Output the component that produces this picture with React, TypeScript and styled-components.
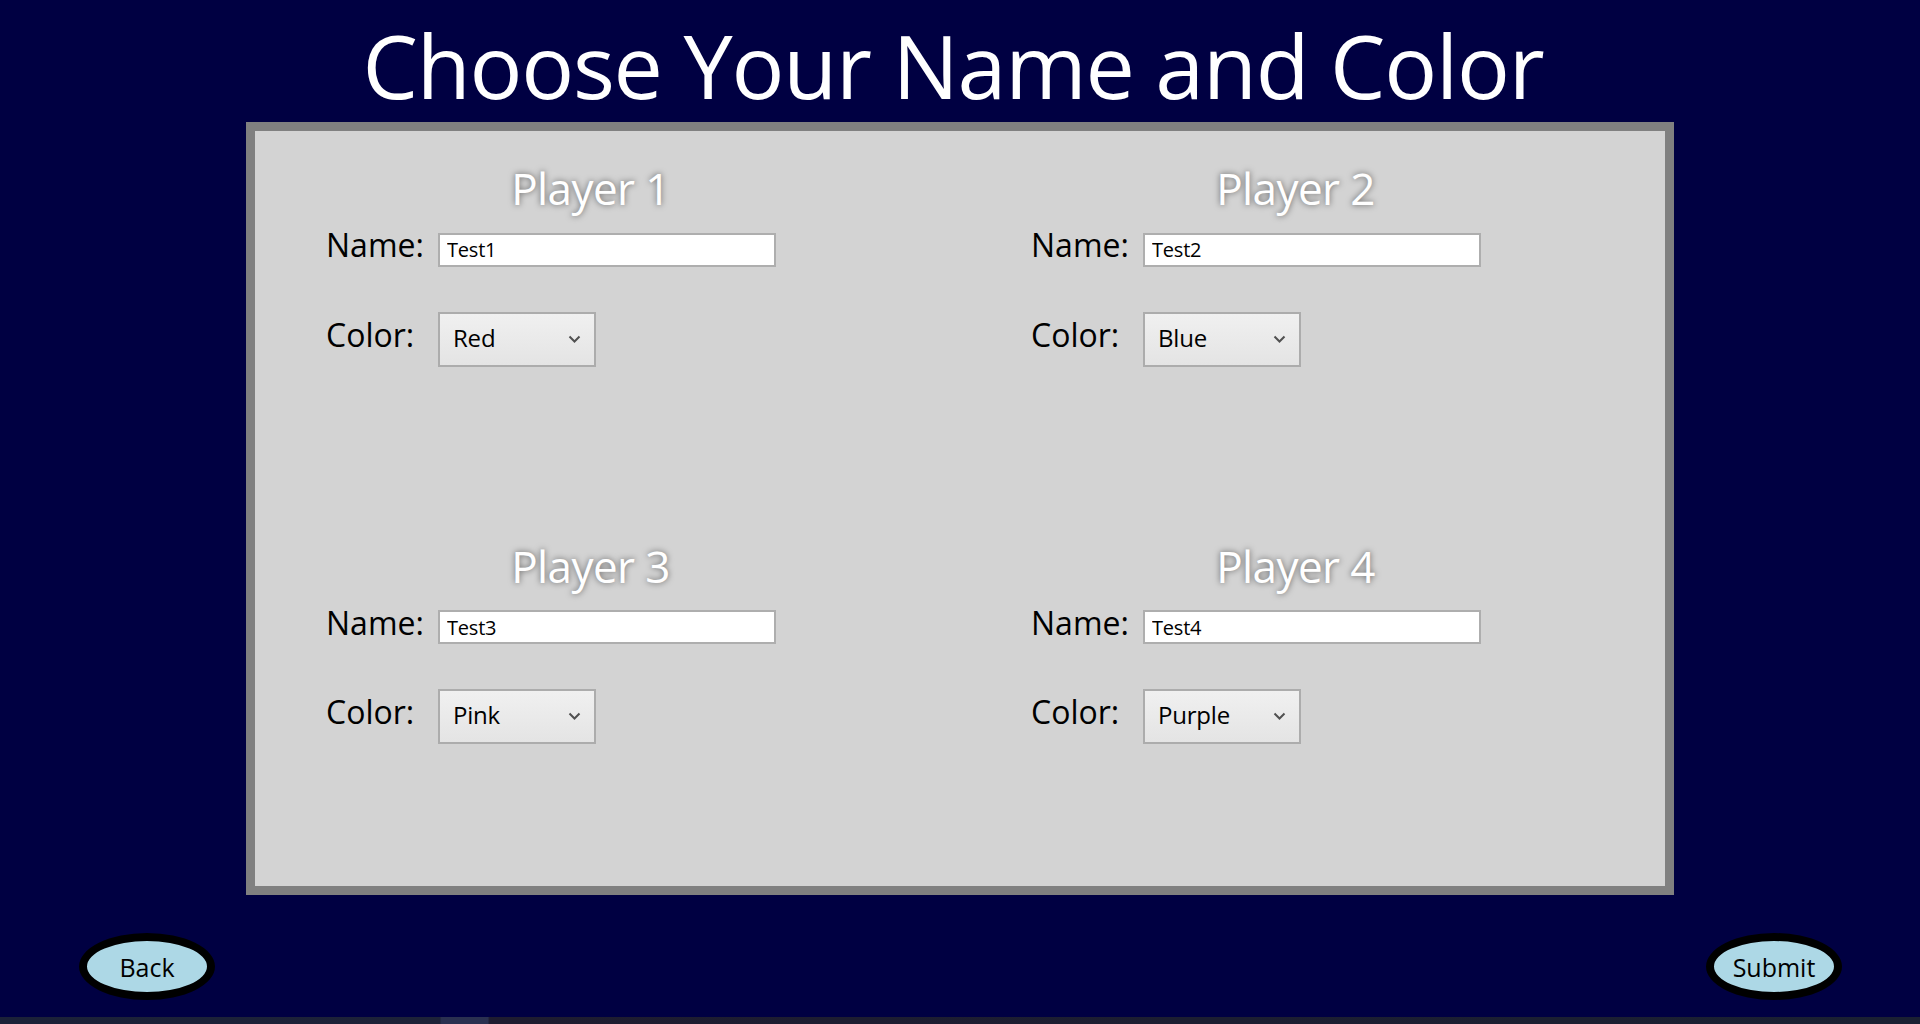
import styled, { createGlobalStyle } from "styled-components";

const GlobalStyle = createGlobalStyle`
    html, body {
        margin: 0;
        padding: 0;
        background: #000042;
    }
    * {
        box-sizing: border-box;
    }
`

const Page = styled.div`
    display: flex;
    flex-direction: column;
    align-items: center;
    width: 1920px;
    height: 1024px;
    padding-top: 21px;
    background: #000042;
    font-family: "Open Sans", "Noto Sans", sans-serif;
    overflow: hidden;
`

const Title = styled.h1`
    margin: 0 0 13px 0;
    padding-right: 14px;
    font-size: 88px;
    line-height: 88px;
    font-weight: 400;
    letter-spacing: -1.2px;
    color: #ffffff;
`

const Panel = styled.div`
    display: grid;
    grid-template-columns: 1fr 1fr;
    grid-template-rows: 1fr 1fr;
    width: 1428px;
    height: 773px;
    background: #d3d3d3;
    border: 9px solid #808080;
`

const PlayerCell = styled.div`
    display: flex;
    flex-direction: column;
    padding-top: 27px;
`

const PlayerTitle = styled.h2`
    margin: 0;
    padding-right: 34px;
    text-align: center;
    font-size: 44px;
    line-height: 60px;
    font-weight: 400;
    letter-spacing: -0.6px;
    color: #ffffff;
    text-shadow: 0 0 6px rgba(0, 0, 0, 0.55);
`

const FieldRow = styled.div<{ $gap: number }>`
    display: flex;
    align-items: baseline;
    padding-left: 71px;
    margin-top: ${(p) => p.$gap}px;
`

const Label = styled.label`
    width: 112px;
    font-size: 32px;
    line-height: 1;
    color: #000000;
`

const NameInput = styled.input`
    width: 338px;
    height: 34px;
    padding: 0 7px;
    border: 2px solid #aeaeae;
    background: #ffffff;
    font-family: "Open Sans", "Noto Sans", sans-serif;
    font-size: 20px;
    letter-spacing: -0.2px;
    color: #000000;
    outline: none;
`

const SelectWrap = styled.div`
    position: relative;
    display: inline-flex;
`

const ColorSelect = styled.select`
    appearance: none;
    -webkit-appearance: none;
    width: 158px;
    height: 55px;
    padding: 0 0 4px 13px;
    border: 2px solid #acacac;
    border-radius: 0;
    background: linear-gradient(#f0f0f0, #e4e4e4);
    font-family: "Open Sans", "Noto Sans", sans-serif;
    font-size: 24px;
    letter-spacing: -0.2px;
    color: #000000;
    outline: none;
`

const Chevron = styled.svg`
    position: absolute;
    right: 15px;
    top: 23px;
    pointer-events: none;
`

const Footer = styled.div`
    display: flex;
    justify-content: space-between;
    width: 100%;
    padding: 0 78px 0 79px;
    margin-top: 38px;
`

const RoundButton = styled.button`
    width: 136px;
    height: 67px;
    border: 8px solid #000000;
    border-radius: 50%;
    background: #add8e6;
    font-family: "Open Sans", "Noto Sans", sans-serif;
    font-size: 25px;
    color: #000000;
    padding: 0;
    cursor: pointer;
`

const Taskbar = styled.div`
    width: 100%;
    height: 7px;
    margin-top: auto;
    background: linear-gradient(90deg, #1b2138 0%, #1d2238 22.9%, #2a3050 23%, #2a3050 25.4%, #1e1c30 25.5%, #1a2032 100%);
`

const players = [
    { name: "Test1", color: "Red" },
    { name: "Test2", color: "Blue" },
    { name: "Test3", color: "Pink" },
    { name: "Test4", color: "Purple" },
]

const colorOptions = ["Red", "Blue", "Green", "Yellow", "Orange", "Pink", "Purple", "Black"]

const App = () => {
    return (
        <>
            <GlobalStyle />
            <Page>
                <Title>Choose Your Name and Color</Title>
                <Panel>
                    {players.map((player, i) => (
                        <PlayerCell key={i}>
                            <PlayerTitle>Player {i + 1}</PlayerTitle>
                            <FieldRow $gap={11}>
                                <Label>Name:</Label>
                                <NameInput type="text" defaultValue={player.name} />
                            </FieldRow>
                            <FieldRow $gap={45}>
                                <Label>Color:</Label>
                                <SelectWrap>
                                    <ColorSelect defaultValue={player.color}>
                                        {colorOptions.map((c) => (
                                            <option key={c} value={c}>{c}</option>
                                        ))}
                                    </ColorSelect>
                                    <Chevron width="13" height="8" viewBox="0 0 13 8">
                                        <path d="M1.5 1.5 L6.5 6.5 L11.5 1.5" fill="none" stroke="#505050" strokeWidth="2" />
                                    </Chevron>
                                </SelectWrap>
                            </FieldRow>
                        </PlayerCell>
                    ))}
                </Panel>
                <Footer>
                    <RoundButton>Back</RoundButton>
                    <RoundButton>Submit</RoundButton>
                </Footer>
                <Taskbar />
            </Page>
        </>
    )
}

export default App;
